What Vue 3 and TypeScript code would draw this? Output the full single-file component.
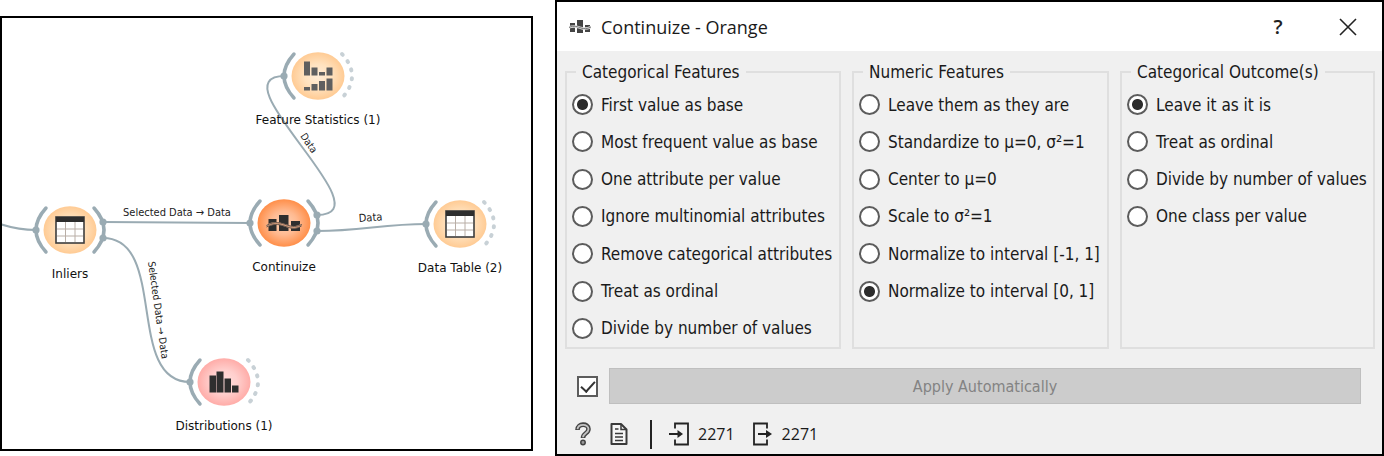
<script setup lang="ts">
import { ref } from 'vue'

type IconKind = 'table' | 'statistics' | 'continuize' | 'distributions'
type Tone = 'peach' | 'orange' | 'pink'

interface WidgetNode {
  name: string
  x: number
  y: number
  tone: Tone
  icon: IconKind
  output: 'linked' | 'open'
}

interface LinkLabel {
  text: string
  x: number
  y: number
  angle: number
}

interface OptionGroup {
  id: string
  title: string
  options: string[]
}

const nodes: WidgetNode[] = [
  { name: 'Feature Statistics (1)', x: 318, y: 76, tone: 'peach', icon: 'statistics', output: 'open' },
  { name: 'Inliers', x: 70, y: 230, tone: 'peach', icon: 'table', output: 'linked' },
  { name: 'Continuize', x: 284, y: 223, tone: 'orange', icon: 'continuize', output: 'linked' },
  { name: 'Data Table (2)', x: 460, y: 224, tone: 'peach', icon: 'table', output: 'open' },
  { name: 'Distributions (1)', x: 224, y: 382, tone: 'pink', icon: 'distributions', output: 'open' },
]

const links: string[] = [
  'M0 224 C12 228 24 230 36 230',
  'M103 222 L250 223',
  'M103 238 C168 238 125 382 190 382',
  'M317 215 C389 215 213 76 285 76',
  'M317 231 C362 231 382 224 427 224',
]

const linkLabels: LinkLabel[] = [
  { text: 'Selected Data → Data', x: 123, y: 216, angle: 0 },
  { text: 'Selected Data → Data', x: 148, y: 262, angle: 82 },
  { text: 'Data', x: 300, y: 136, angle: 56 },
  { text: 'Data', x: 359, y: 222, angle: -4 },
]

const groups: OptionGroup[] = [
  {
    id: 'categorical',
    title: 'Categorical Features',
    options: [
      'First value as base',
      'Most frequent value as base',
      'One attribute per value',
      'Ignore multinomial attributes',
      'Remove categorical attributes',
      'Treat as ordinal',
      'Divide by number of values',
    ],
  },
  {
    id: 'numeric',
    title: 'Numeric Features',
    options: [
      'Leave them as they are',
      'Standardize to μ=0, σ²=1',
      'Center to μ=0',
      'Scale to σ²=1',
      'Normalize to interval [-1, 1]',
      'Normalize to interval [0, 1]',
    ],
  },
  {
    id: 'outcome',
    title: 'Categorical Outcome(s)',
    options: ['Leave it as it is', 'Treat as ordinal', 'Divide by number of values', 'One class per value'],
  },
]

const selected = ref<Record<string, number>>({ categorical: 0, numeric: 5, outcome: 0 })
const autoApply = ref(true)
</script>

<template>
  <main class="page">
    <section class="canvas" aria-label="Workflow">
      <svg class="workflow" viewBox="2 18 529 431">
        <defs>
          <radialGradient id="tone-peach">
            <stop offset="0" stop-color="#ffecd6" />
            <stop offset="0.5" stop-color="#ffe2bf" />
            <stop offset="1" stop-color="#ffcb94" />
          </radialGradient>
          <radialGradient id="tone-orange">
            <stop offset="0" stop-color="#ffd2b5" />
            <stop offset="0.5" stop-color="#ffba91" />
            <stop offset="1" stop-color="#ff8f4a" />
          </radialGradient>
          <radialGradient id="tone-pink">
            <stop offset="0" stop-color="#ffdedd" />
            <stop offset="0.5" stop-color="#ffcfcd" />
            <stop offset="1" stop-color="#ffaca8" />
          </radialGradient>
        </defs>

        <path v-for="d in links" :key="d" class="link" :d="d" />

        <g v-for="node in nodes" :key="node.name" :transform="`translate(${node.x} ${node.y})`">
          <path class="anchor" d="M-24 -22 Q-44 0 -24 22" />
          <circle class="dot" cx="-34" cy="0" r="3.6" />
          <template v-if="node.output === 'linked'">
            <path class="anchor" d="M24 -22 Q44 0 24 22" />
            <circle class="dot" cx="33" cy="-8" r="3.6" />
            <circle class="dot" cx="33" cy="8" r="3.6" />
          </template>
          <path v-else class="anchor open" d="M24 -22 Q44 0 24 22" />
          <ellipse rx="26.5" ry="23.7" :fill="`url(#tone-${node.tone})`" />

          <g v-if="node.icon === 'table'">
            <rect x="-14" y="-13" width="28" height="26" fill="#fff" />
            <path d="M-13 -1H13M-13 6H13M-4.500 -9V12M5 -9V12" stroke="#b9aea6" fill="none" />
            <rect x="-14" y="-13" width="28" height="26" stroke="#3c3c3c" stroke-width="1.600" fill="none" />
            <rect x="-14" y="-13" width="28" height="5" fill="#2e2e2e" />
          </g>
          <g v-else-if="node.icon === 'statistics'" fill="#5f5f5f">
            <path d="M-14 -14.500h6v14h-6zM-6.500 -8.500h6v8h-6zM1 -4h6v3.500h-6zM8.500 -8.500h6v8h-6z" />
            <path d="M-14 11h6v3.500h-6zM-6.500 8h6v6.500h-6zM1 5h6v9.500h-6zM8.500 2.500h6v12h-6z" />
          </g>
          <g v-else-if="node.icon === 'continuize'">
            <path d="M-15.500 -4h8v12h-8zM-5 -8h9.500v16h-9.500zM7 -2h9v10h-9z" fill="#2e2e2e" />
            <path d="M-17.500 3C-9 -2 -3 1 3 3S12 5 17.500 2" stroke="#d99f7c" stroke-width="2.500" fill="none" />
            <path
              d="M-17.500 2.500C-9 -2.500 -3 0 3 2S12 4 18 1.500M-17.500 4C-9 -.5 -3 2 3 4S12 6 17.500 3"
              stroke="#6d5a50"
              stroke-width="1"
              fill="none"
            />
          </g>
          <path
            v-else
            d="M-14.500 -6.500h6.500v17h-6.500zM-7.500 -10.500h7v21h-7zM.5 -3.500h6.500v14h-6.500zM8 3.500h6.500v7h-6.500z"
            fill="#2e2e2e"
          />

          <text class="node-name" y="48">{{ node.name }}</text>
        </g>

        <text
          v-for="label in linkLabels"
          :key="`${label.x}-${label.y}`"
          class="link-name"
          :class="{ steep: label.angle > 45 }"
          :transform="`translate(${label.x} ${label.y}) rotate(${label.angle})`"
        >{{ label.text }}</text>
      </svg>
    </section>

    <section class="dialog" aria-labelledby="dialog-title">
      <header class="titlebar">
        <svg class="app-icon" width="22" height="16" viewBox="0 0 22 16">
          <path d="M1 4h5v9h-5zM8 1h6v13h-6zM16 6h5v7h-5z" fill="#444" />
          <path d="M0 8.500C5 6 9 8 12 9S18 10 22 8" stroke="#ddd" stroke-width="2.500" fill="none" />
          <path d="M0 8.500C5 6 9 8 12 9S18 10 22 8" stroke="#777" stroke-width="1" fill="none" />
        </svg>
        <h1 id="dialog-title">Continuize - Orange</h1>
        <button type="button" class="window-button help">?</button>
        <button type="button" class="window-button" aria-label="Close">
          <svg width="18" height="18" viewBox="0 0 18 18">
            <path d="M1 1L17 17M17 1L1 17" stroke="#222" stroke-width="1.600" fill="none" />
          </svg>
        </button>
      </header>

      <form class="body" @submit.prevent>
        <div class="groups">
          <fieldset v-for="group in groups" :key="group.id" class="group">
            <legend>{{ group.title }}</legend>
            <div class="options">
              <label v-for="(option, index) in group.options" :key="option" class="option">
                <input v-model="selected[group.id]" type="radio" :name="group.id" :value="index" />
                <span>{{ option }}</span>
              </label>
            </div>
          </fieldset>
        </div>

        <div class="apply">
          <input v-model="autoApply" type="checkbox" aria-label="Apply Automatically" />
          <button type="submit" :disabled="autoApply">Apply Automatically</button>
        </div>
      </form>

      <footer class="status">
        <button type="button" class="tool" aria-label="Help">
          <svg width="18" height="24" viewBox="0 0 18 24">
            <path d="M3.500 8C3.500 1 14.500 1 14.500 7C14.500 11.500 9 11 9 16" stroke="#444" stroke-width="4.600" fill="none" />
            <path d="M3.500 7.200C4 1.500 14.500 1.500 14.500 7C14.500 11.500 9 11 9 15.300" stroke="#c4c4c4" stroke-width="1.800" fill="none" />
            <circle cx="9" cy="20.500" r="2.200" stroke="#444" stroke-width="1.500" fill="#999" />
          </svg>
        </button>
        <button type="button" class="tool" aria-label="Report">
          <svg width="18" height="24" viewBox="0 0 18 24">
            <path d="M1.500 2H11L16.500 7.500V22H1.500Z" stroke="#3a3a3a" stroke-width="2" fill="#f6f6f6" stroke-linejoin="round" />
            <path d="M11 2V7.500H16.500" stroke="#3a3a3a" stroke-width="1.500" fill="none" />
            <path d="M5 7H8.500M5 11.500H13M5 15H13M5 18.500H13" stroke="#3a3a3a" stroke-width="1.500" fill="none" />
          </svg>
        </button>
        <span class="divider"></span>
        <span class="count">
          <svg width="20" height="24" viewBox="0 0 20 24">
            <path d="M6 6.500V1.500H19V22.500H6V17.500" stroke="#222" stroke-width="1.800" fill="none" />
            <path d="M0 12H10" stroke="#222" stroke-width="2" fill="none" />
            <path d="M8.500 8L14 12L8.500 16Z" fill="#222" />
          </svg>
          2271
        </span>
        <span class="count">
          <svg width="20" height="24" viewBox="0 0 20 24">
            <path d="M14 6.500V1.500H1V22.500H14V17.500" stroke="#222" stroke-width="1.800" fill="none" />
            <path d="M5 12H14" stroke="#222" stroke-width="2" fill="none" />
            <path d="M13 8L19 12L13 16Z" fill="#222" />
          </svg>
          2271
        </span>
      </footer>
    </section>
  </main>
</template>

<style>
body {
  margin: 0;
  background: #fff;
}
</style>

<style scoped>
* {
  box-sizing: border-box;
}

.page {
  display: grid;
  grid-template-columns: 533fr 829fr;
  gap: 22px;
  min-height: 100vh;
}

.canvas {
  align-self: start;
  margin-top: 16px;
  border: 2px solid #000;
  background: #fff;
}

.workflow {
  display: block;
  width: 100%;
  height: auto;
}

.link {
  fill: none;
  stroke: #9aabb3;
  stroke-width: 2;
}

.anchor {
  fill: none;
  stroke: #9aabb3;
  stroke-width: 3.500;
  stroke-linecap: round;
}

.anchor.open {
  stroke: #c8d1d6;
  stroke-dasharray: 1 8;
  stroke-width: 4;
}

.dot {
  fill: #9aabb3;
}

.node-name {
  font-family: "DejaVu Sans", sans-serif;
  font-size: 12px;
  text-anchor: middle;
  fill: #111;
}

.link-name {
  font-family: "DejaVu Sans Condensed", "DejaVu Sans", sans-serif;
  font-size: 11px;
  fill: #222;
}

.link-name.steep {
  font-size: 10px;
}

.dialog {
  display: flex;
  flex-direction: column;
  border: 2px solid #000;
  background: #f0f0f0;
  color: #1a1a1a;
  font-family: "DejaVu Sans Condensed", "DejaVu Sans", sans-serif;
  font-size: 17px;
}

.titlebar {
  display: flex;
  align-items: center;
  height: 49px;
  padding-left: 12px;
  padding-right: 8px;
  background: #fff;
}

h1 {
  flex: 1;
  margin: 0 0 0 10px;
  font-family: "Open Sans", sans-serif;
  font-size: 18px;
  font-weight: 400;
}

button {
  font: inherit;
  padding: 0;
}

.window-button {
  display: flex;
  align-items: center;
  justify-content: center;
  width: 52px;
  height: 32px;
  margin-left: 18px;
  border: 0;
  background: none;
  color: #222;
}

.help {
  font-family: "Open Sans", sans-serif;
  font-size: 20px;
  font-weight: 600;
}

.body {
  display: flex;
  flex: 1;
  flex-direction: column;
  padding: 7px 7px 0 8px;
}

.groups {
  display: grid;
  flex: 1;
  grid-template-columns: 276fr 257fr 255fr;
  gap: 11px;
}

.group {
  display: flex;
  flex-direction: column;
  min-width: 0;
  margin: 0;
  padding: 0 5px;
  border: 2px solid #dfdfdf;
}

legend {
  margin-left: 4px;
  padding: 0 6px;
  line-height: 28px;
}

.options {
  display: grid;
  flex: 1;
  grid-template-rows: repeat(7, 1fr);
}

.option {
  display: flex;
  align-items: center;
  gap: 8px;
  white-space: nowrap;
}

input {
  flex: none;
  appearance: none;
  width: 21px;
  height: 21px;
  margin: 0;
  border: 2px solid #5c5c5c;
  background: #fff;
}

input[type="radio"] {
  border-radius: 50%;
}

input[type="radio"]:checked {
  background: radial-gradient(circle, #2c2c2c 5px, #fff 6px);
}

input[type="checkbox"]:checked::after {
  content: "";
  display: block;
  width: 6px;
  height: 12px;
  margin: 0 auto;
  border: solid #333;
  border-width: 0 2px 2px 0;
  transform: rotate(42deg);
}

.apply {
  display: flex;
  align-items: center;
  gap: 11px;
  margin-top: 19px;
  padding: 0 14px 0 12px;
}

.apply button {
  flex: 1;
  height: 36px;
  border: 1px solid #bfbfbf;
  background: #ccc;
  color: #838383;
  font-size: 16px;
}

.status {
  display: flex;
  align-items: center;
  height: 30px;
  margin: 15px 0 5px;
  padding-left: 17px;
  font-family: "Open Sans", sans-serif;
  font-size: 16px;
}

.tool {
  display: flex;
  margin-right: 18px;
  border: 0;
  background: none;
}

.divider {
  width: 2px;
  height: 29px;
  margin: 0 17px 0 4px;
  background: #222;
}

.count {
  display: flex;
  align-items: center;
  gap: 9px;
  margin-right: 18px;
}
</style>
